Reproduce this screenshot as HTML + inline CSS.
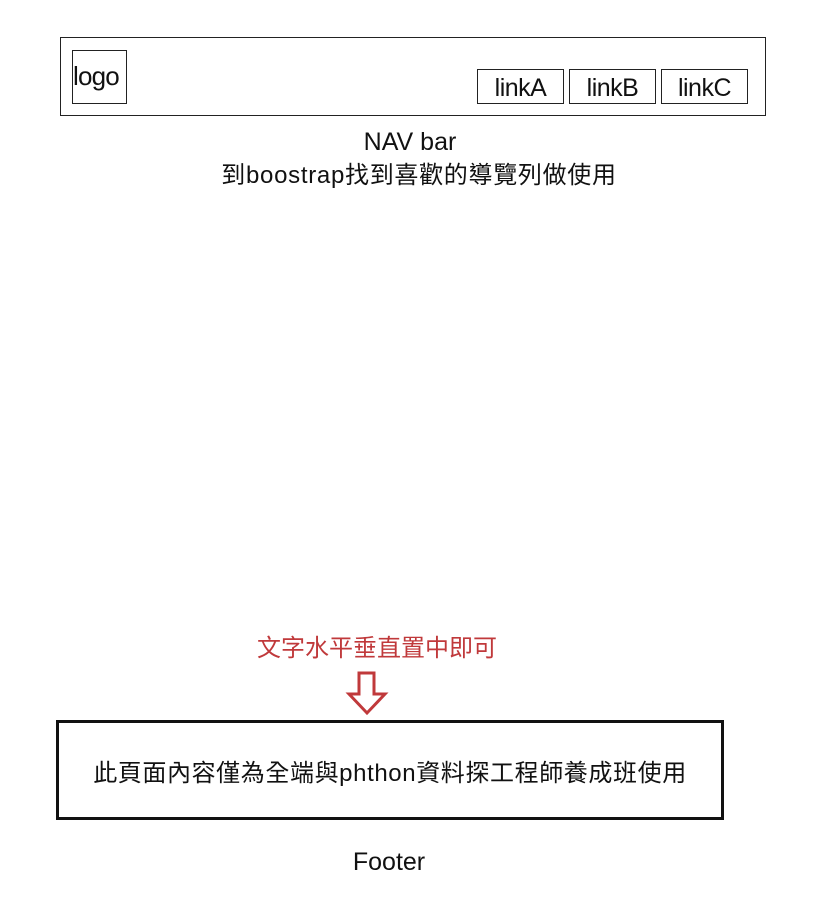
<!DOCTYPE html>
<html><head><meta charset="utf-8"><style>
body{margin:0;width:818px;height:924px;background:#fff;position:relative;font-family:"Liberation Sans","Noto Sans CJK TC",sans-serif;color:#111;overflow:hidden}
.a{position:absolute;box-sizing:border-box}
.t{position:absolute;white-space:nowrap;line-height:1}
.lk{border:1px solid #222;font-size:25px;text-align:center;line-height:36px;letter-spacing:-0.5px}
</style></head><body>
<div class="a" style="left:60px;top:37px;width:706px;height:79px;border:1px solid #222"></div>
<div class="a" style="left:72px;top:50px;width:55px;height:54px;border:1px solid #222"></div>
<div class="t" style="left:73px;top:63px;font-size:26px;letter-spacing:-0.8px">logo</div>
<div class="a lk" style="left:477px;top:69px;width:87px;height:35px">linkA</div>
<div class="a lk" style="left:569px;top:69px;width:87px;height:35px">linkB</div>
<div class="a lk" style="left:661px;top:69px;width:87px;height:35px">linkC</div>
<div class="t" style="left:311px;width:198px;text-align:center;top:130px;font-size:25px">NAV bar</div>
<div class="t" style="left:200px;width:438px;text-align:center;top:164px;font-size:24px;letter-spacing:0.7px">到boostrap找到喜歡的導覽列做使用</div>
<div class="t" style="left:240px;width:274px;text-align:center;top:637px;font-size:24px;color:#c0393b">文字水平垂直置中即可</div>
<svg class="a" style="left:345px;top:670px" width="44" height="46" viewBox="0 0 44 46"><path d="M14 3 H29 V24 H40 L22 43 L4 24 H14 Z" fill="none" stroke="#c0393b" stroke-width="3" stroke-linejoin="miter"/></svg>
<div class="a" style="left:56px;top:720px;width:668px;height:100px;border:3px solid #111"></div>
<div class="t" style="left:60px;width:660px;text-align:center;top:762px;font-size:24px;letter-spacing:0.6px">此頁面內容僅為全端與phthon資料探工程師養成班使用</div>
<div class="t" style="left:300px;width:178px;text-align:center;top:850px;font-size:25px">Footer</div>
</body></html>
